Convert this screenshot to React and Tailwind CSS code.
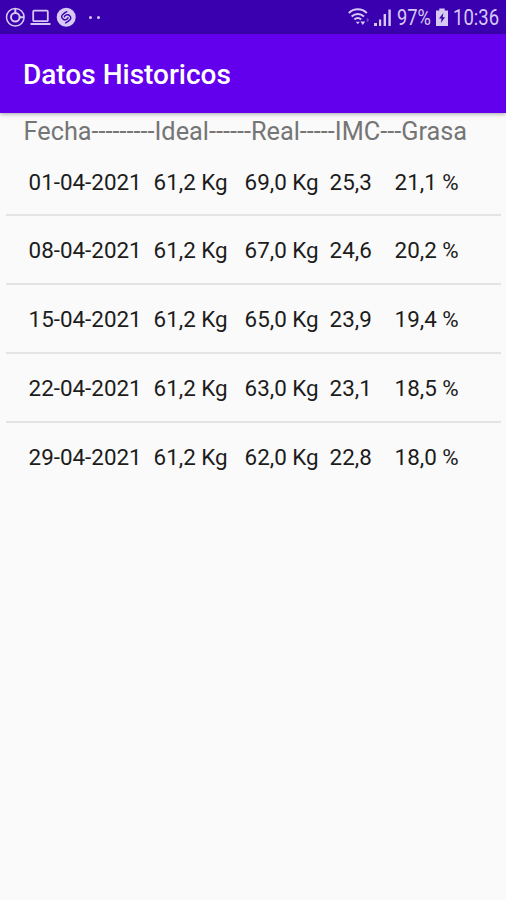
import React from "react";

const registros = [
  { fecha: "01-04-2021", ideal: "61,2 Kg", real: "69,0 Kg", imc: "25,3", grasa: "21,1 %" },
  { fecha: "08-04-2021", ideal: "61,2 Kg", real: "67,0 Kg", imc: "24,6", grasa: "20,2 %" },
  { fecha: "15-04-2021", ideal: "61,2 Kg", real: "65,0 Kg", imc: "23,9", grasa: "19,4 %" },
  { fecha: "22-04-2021", ideal: "61,2 Kg", real: "63,0 Kg", imc: "23,1", grasa: "18,5 %" },
  { fecha: "29-04-2021", ideal: "61,2 Kg", real: "62,0 Kg", imc: "22,8", grasa: "18,0 %" },
];

function DataSaverIcon() {
  return (
    <svg className="ml-[5px] h-5 w-5" viewBox="0 0 20 20" fill="none" stroke="currentColor">
      <circle cx="10.3" cy="10.3" r="8.8" strokeWidth="1.5" />
      <circle cx="10.3" cy="10.3" r="4.3" strokeWidth="2" />
      <path d="M10.3 1.2v5M14.5 10.3H19" strokeWidth="2" />
    </svg>
  );
}

function LaptopIcon() {
  return (
    <svg className="ml-[5px] h-5 w-[21px]" viewBox="0 0 21 20" fill="none" stroke="currentColor">
      <rect x="3.2" y="3.6" width="14.6" height="10.6" rx="1" strokeWidth="1.8" />
      <path d="M0.5 17h20" strokeWidth="2" />
    </svg>
  );
}

function ShazamIcon() {
  return (
    <svg className="ml-[5px] h-5 w-5" viewBox="0 0 20 20" fill="none">
      <circle cx="10.2" cy="10.3" r="9.5" fill="currentColor" />
      <path
        d="M8.2 12.9C5.8 11.5 4.9 9.7 6.2 8.1C7.4 6.8 9.2 5.5 10.8 4.7M12.2 7.7c2.4 1.4 3.3 3.2 2 4.8c-1.2 1.3-3 2.6-4.6 3.4M8.4 9.8c0-1.3 2.6-2.4 4-2M12 10.8c0 1.3-2.6 2.4-4 2"
        stroke="#3a00b0"
        strokeWidth="1.4"
        strokeLinecap="round"
      />
    </svg>
  );
}

function WifiIcon() {
  return (
    <svg className="h-5 w-[22px]" viewBox="0 0 22 20" fill="none" stroke="currentColor">
      <path
        d="M.8 6C5.8 1.1 13.8 1.1 18.8 6M3.6 9.4c3.6-3.3 8.8-3.3 12.4 0M6.4 12.6c2-1.8 4.8-1.8 6.8 0"
        strokeWidth="2"
      />
      <path d="M7.8 14.8h4L9.8 17.2z" fill="currentColor" stroke="none" />
      <path d="M12.4 14.6h4.8L14.8 18z" fill="currentColor" stroke="none" />
      <path d="M18.8 10.8l2.3 2.3l-2.3 2.3z" fill="currentColor" stroke="none" opacity="0.4" />
    </svg>
  );
}

function SignalIcon() {
  return (
    <svg className="ml-1 h-5 w-[18px]" viewBox="0 0 18 20" fill="currentColor">
      <path d="M0 16h3v3H0zM5 12.5h2.2V19H5zM9.6 7h2.4V19H9.6zM14.4 2.4h2.4V19h-2.4z" />
    </svg>
  );
}

function BatteryIcon() {
  return (
    <svg className="ml-[5px] h-5 w-3" viewBox="0 0 12 20" fill="currentColor">
      <path d="M3.3 1.6h5.4v2H12V19H0V3.6h3.3z" />
      <path d="M7.4 6L3 11.4h2.6L4.8 16L9 10.2H6.6z" fill="#3a00b0" />
    </svg>
  );
}

function StatusBar() {
  return (
    <div className="flex h-[34px] items-center bg-[#3a00b0] text-[#d6c9f3]">
      <DataSaverIcon />
      <LaptopIcon />
      <ShazamIcon />
      <div className="ml-[13px] flex gap-[5px]">
        <span className="h-[3px] w-[3px] rounded-full bg-current" />
        <span className="h-[3px] w-[3px] rounded-full bg-current" />
      </div>
      <div className="ml-auto flex items-center pr-[7.5px]">
        <WifiIcon />
        <SignalIcon />
        <span className="ml-[5px] w-[34px] origin-left scale-x-[0.85] pt-0.5 text-[21.5px] leading-8 font-[450] whitespace-nowrap">
          97%
        </span>
        <BatteryIcon />
        <span className="ml-[5px] w-[46px] origin-left scale-x-[0.86] pt-0.5 text-[21.5px] leading-8 font-[450] whitespace-nowrap">
          10:36
        </span>
      </div>
    </div>
  );
}

function Registro({ registro }) {
  return (
    <li className="flex h-[68.8px] items-center pt-[3px] pl-[22.6px] text-[22.4px] text-[#1c1c1c] whitespace-nowrap last:h-[66.8px]">
      <span className="w-[125px]">{registro.fecha}</span>
      <span className="w-[91px]">{registro.ideal}</span>
      <span className="w-[85px]">{registro.real}</span>
      <span className="w-[65px]">{registro.imc}</span>
      <span>{registro.grasa}</span>
    </li>
  );
}

export default function App() {
  return (
    <div className="flex h-[900px] w-[506px] flex-col overflow-hidden bg-[#fafafa] font-['Roboto',sans-serif]">
      <StatusBar />
      <header className="flex h-[79px] shrink-0 items-center bg-[#6200ee] pl-[23px] shadow-[0_1px_4px_rgba(0,0,0,0.35)]">
        <h1 className="pt-0.5 text-[28px] leading-10 font-medium text-white">Datos Historicos</h1>
      </header>
      <p className="h-[34.5px] pl-[23.5px] text-[25.3px] leading-[38px] text-[#757575] whitespace-nowrap">
        Fecha---------Ideal------Real-----IMC---Grasa
      </p>
      <ul className="ml-1.5 mr-[5px] divide-y-2 divide-[#e4e4e4]">
        {registros.map((registro) => (
          <Registro key={registro.fecha} registro={registro} />
        ))}
      </ul>
    </div>
  );
}
